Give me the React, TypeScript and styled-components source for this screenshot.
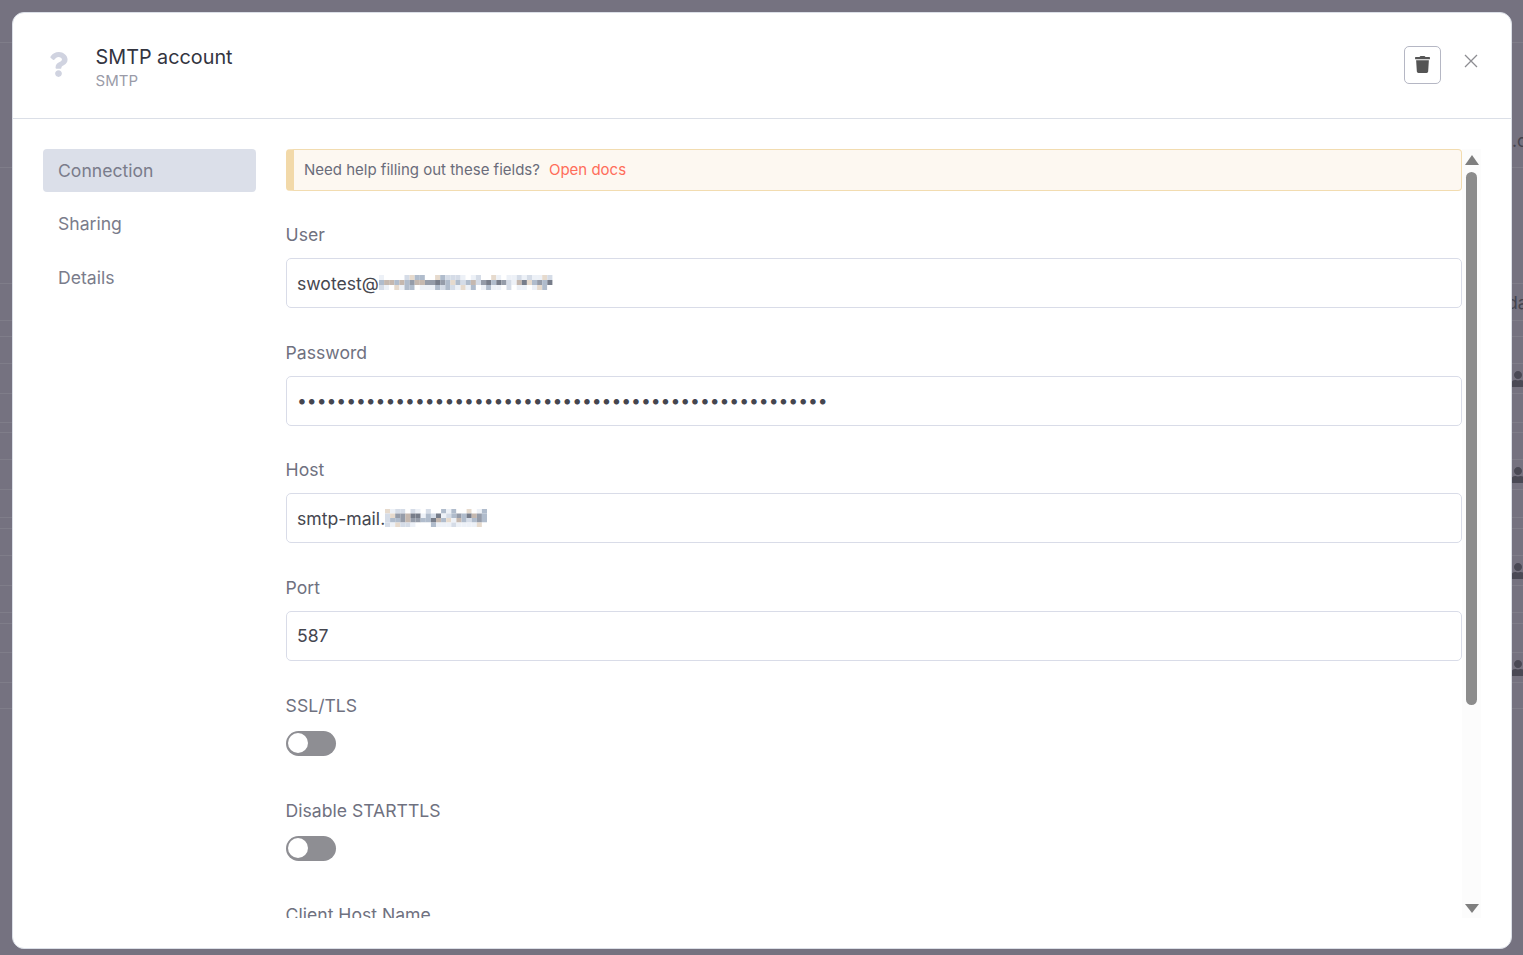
import React from 'react'
import styled, { createGlobalStyle } from 'styled-components'
import { FaQuestion, FaTrash, FaUser } from 'react-icons/fa'

const GlobalStyle = createGlobalStyle`
  html, body {
    margin: 0;
    padding: 0;
    height: 100%;
    overflow: hidden;
    background: #757280;
    font-family: Inter, "Liberation Sans", sans-serif;
  }
  * {
    box-sizing: border-box;
  }
`

// what is left of the page under the dimmed overlay
const Backdrop = styled.div`
  position: fixed;
  inset: 0;
  overflow: hidden;
  background: #757280;
`
const BackdropRow = styled.div<{ $height: number; $indent: number; $lift: number }>`
  height: ${({ $height }) => $height}px;
  border-bottom: 1px solid #7f7d89;
  display: flex;
  align-items: center;
  padding-left: ${({ $indent }) => $indent}px;
  padding-top: ${({ $lift }) => $lift}px;
  color: #45444f;
  font-size: 17.6px;
  white-space: nowrap;
`
const BackdropUser = styled(FaUser)`
  flex: none;
  color: #4a4955;
`

const Overlay = styled.div`
  position: fixed;
  inset: 0;
  padding: 12px 11px 6px 12px;
`
const Modal = styled.div`
  height: 100%;
  display: flex;
  flex-direction: column;
  background: #fff;
  border: 1px solid #dbdfe7;
  border-radius: 12px;
  overflow: hidden;
`

const Header = styled.header`
  flex: none;
  height: 106px;
  display: flex;
  align-items: center;
  padding: 0 32px 0 29px;
  border-bottom: 1px solid #dbdfe7;
`
const TypeIcon = styled(FaQuestion)`
  flex: none;
  width: 33px;
  height: 25px;
  margin: -2px 20.6px 0 0;
  color: #d0d3e0;
`
const HeaderText = styled.div`
  flex: 1;
  margin-top: 2px;
`
const Title = styled.div`
  font-size: 19.8px;
  line-height: 28px;
  color: #33343f;
`
const Subtitle = styled.div`
  margin-top: 1px;
  font-size: 15px;
  line-height: 18px;
  color: #9a9ba8;
`
const IconButton = styled.button`
  width: 37px;
  height: 38px;
  margin: -2px 22px 0 0;
  padding: 0;
  display: flex;
  align-items: center;
  justify-content: center;
  background: #fff;
  border: 1px solid #b5b7c4;
  border-radius: 5px;
  color: #555;
`
const CloseButton = styled.button`
  width: 16px;
  height: 16px;
  margin: -9px 0 0 0;
  padding: 0;
  display: flex;
  background: none;
  border: 0;
  color: #8d8d92;
`

const Body = styled.div`
  flex: 1;
  min-height: 0;
  display: flex;
  padding: 30px 30px 30px 30px;
`
const Sidebar = styled.nav`
  flex: none;
  width: 213px;
  margin-right: 30px;
  display: flex;
  flex-direction: column;
  gap: 10.3px;
`
const NavItem = styled.div<{ $active?: boolean }>`
  height: 43px;
  display: flex;
  align-items: center;
  padding-left: 15px;
  border-radius: 4px;
  font-size: 17.6px;
  color: #7a7c8b;
  background: ${({ $active }) => ($active ? '#dbdfe9' : 'transparent')};
`

const Content = styled.div`
  flex: 1;
  min-width: 0;
  overflow-y: auto;
  scrollbar-width: none;
`
const Callout = styled.div`
  height: 42px;
  margin-bottom: 32.36px;
  display: flex;
  align-items: center;
  padding: 0 0 2px 10px;
  background: #fdf8f1;
  border: 1px solid #f2dcb0;
  border-left: 8px solid #f2d9a9;
  border-radius: 4px;
  font-size: 15px;
  color: #6a6c7a;
`
const DocsLink = styled.a`
  margin-left: 9px;
  color: #ff6d5a;
`

const Field = styled.div<{ $gap: number }>`
  margin-bottom: ${({ $gap }) => $gap}px;
`
const Label = styled.label<{ $gap: number }>`
  display: block;
  height: 24px;
  margin-bottom: ${({ $gap }) => $gap}px;
  padding-left: 0;
  text-indent: -0.4px;
  font-size: 17.6px;
  line-height: 24px;
  color: #6f7180;
`
const InputWrap = styled.div`
  position: relative;
`
const Input = styled.input`
  display: block;
  width: 100%;
  height: 50px;
  padding: 0 10px;
  background: #fff;
  border: 1px solid #d9dce8;
  border-radius: 5px;
  outline: none;
  font-family: inherit;
  font-size: 17.6px;
  color: #45464f;
`
const PasswordInput = styled(Input)`
  letter-spacing: -0.07px;
`
const Redacted = styled.svg<{ $left: number; $top: number }>`
  position: absolute;
  left: ${({ $left }) => $left}px;
  top: ${({ $top }) => $top}px;
`
const Toggle = styled.div`
  position: relative;
  width: 50px;
  height: 25px;
  border-radius: 13px;
  background: #8e8e93;
`
const Knob = styled.span`
  position: absolute;
  left: 2px;
  top: 2.5px;
  width: 20px;
  height: 20px;
  border-radius: 50%;
  background: #fff;
`

const Scrollbar = styled.div`
  flex: none;
  width: 19px;
  display: flex;
  flex-direction: column;
  align-items: center;
  padding-top: 6px;
  background: #fcfcfc;
`
const ArrowUp = styled.div`
  flex: none;
  width: 0;
  height: 0;
  border-left: 7px solid transparent;
  border-right: 7px solid transparent;
  border-bottom: 10px solid #7f7f7f;
`
const ArrowDown = styled.div`
  flex: none;
  width: 0;
  height: 0;
  margin-bottom: 5px;
  border-left: 7px solid transparent;
  border-right: 7px solid transparent;
  border-top: 9px solid #7f7f7f;
`
const Thumb = styled.div`
  flex: none;
  width: 11px;
  height: 533px;
  margin-top: 7px;
  border-radius: 6px;
  background: #8c8c8c;
`
const Spacer = styled.div`
  flex: 1;
`

const backdropRows: { bottom: number; text?: string; user?: boolean; indent?: number; lift?: number }[] = [
  { bottom: 42 },
  { bottom: 167, text: '.c', indent: 1512, lift: 70 },
  { bottom: 283 },
  { bottom: 320, text: 'da', indent: 1507 },
  { bottom: 336 },
  { bottom: 363 },
  { bottom: 393, user: true },
  { bottom: 422 },
  { bottom: 432 },
  { bottom: 459 },
  { bottom: 489, user: true },
  { bottom: 517 },
  { bottom: 528 },
  { bottom: 555 },
  { bottom: 585, user: true },
  { bottom: 612 },
  { bottom: 623 },
  { bottom: 652 },
  { bottom: 682, user: true },
  { bottom: 708 },
]

const palette = ['#ffffff', '#edf1f7', '#d5dce7', '#b0bccc', '#959ca9', '#e6dacd', '#c5b8af', '#777d8a']

// the address is pixelated in the picture: a small mosaic of fixed cells
const MosaicCells: React.FC<{ cols: number; rows: number; w: number; h: number; seed: number }> = ({
  cols,
  rows,
  w,
  h,
  seed,
}) => {
  const cells = []
  let n = seed
  for (let y = 0; y < rows; y++) {
    for (let x = 0; x < cols; x++) {
      n = (n * 1103515245 + 12345) % 2147483648
      const r = (n >> 12) % 100
      const edge = y === 0 || y === rows - 1
      const idx = edge
        ? r < 25 ? 0 : r < 50 ? 1 : r < 70 ? 2 : r < 85 ? 5 : 3
        : r < 8 ? 1 : r < 20 ? 2 : r < 42 ? 3 : r < 65 ? 4 : r < 76 ? 5 : r < 88 ? 6 : 7
      cells.push(<rect key={`${x}-${y}`} x={x * w} y={y * h} width={w} height={h} fill={palette[idx]} />)
    }
  }
  return <>{cells}</>
}

export default function App() {
  let previous = 0
  return (
    <>
      <GlobalStyle />
      <Backdrop>
        {backdropRows.map((row) => {
          const height = row.bottom + 1 - previous
          previous = row.bottom + 1
          return (
            <BackdropRow
              key={row.bottom}
              $height={height}
              $indent={row.indent ?? 1510}
              $lift={row.lift ?? 0}
            >
              {row.text}
              {row.user && <BackdropUser size={16} />}
            </BackdropRow>
          )
        })}
      </Backdrop>
      <Overlay>
        <Modal>
          <Header>
            <TypeIcon />
            <HeaderText>
              <Title>SMTP account</Title>
              <Subtitle>SMTP</Subtitle>
            </HeaderText>
            <IconButton>
              <FaTrash size={17} />
            </IconButton>
            <CloseButton>
              <svg width="16" height="16" viewBox="0 0 16 16" fill="none" stroke="currentColor" strokeWidth="1.3">
                <path d="M2 2l12 12M14 2L2 14" />
              </svg>
            </CloseButton>
          </Header>
          <Body>
            <Sidebar>
              <NavItem $active>Connection</NavItem>
              <NavItem>Sharing</NavItem>
              <NavItem>Details</NavItem>
            </Sidebar>
            <Content>
              <Callout>
                Need help filling out these fields?
                <DocsLink>Open docs</DocsLink>
              </Callout>
              <Field $gap={32.67}>
                <Label $gap={10.8}>User</Label>
                <InputWrap>
                  <Input readOnly value="swotest@" />
                  <Redacted $left={93} $top={17} width="174" height="15">
                    <MosaicCells cols={34} rows={3} w={5.1} h={5} seed={7} />
                  </Redacted>
                </InputWrap>
              </Field>
              <Field $gap={32.87}>
                <Label $gap={10.8}>Password</Label>
                <PasswordInput readOnly type="password" value={'x'.repeat(54)} />
              </Field>
              <Field $gap={32.87}>
                <Label $gap={10.8}>Host</Label>
                <InputWrap>
                  <Input readOnly value="smtp-mail." />
                  <Redacted $left={99} $top={16} width="103" height="18">
                    <MosaicCells cols={20} rows={4} w={5.1} h={4.5} seed={31} />
                  </Redacted>
                </InputWrap>
              </Field>
              <Field $gap={32.87}>
                <Label $gap={10.8}>Port</Label>
                <Input readOnly value="587" />
              </Field>
              <Field $gap={43}>
                <Label $gap={13}>SSL/TLS</Label>
                <Toggle>
                  <Knob />
                </Toggle>
              </Field>
              <Field $gap={42.4}>
                <Label $gap={13}>Disable STARTTLS</Label>
                <Toggle>
                  <Knob />
                </Toggle>
              </Field>
              <Field $gap={32.67}>
                <Label $gap={11}>Client Host Name</Label>
                <Input readOnly value="" />
              </Field>
            </Content>
            <Scrollbar>
              <ArrowUp />
              <Thumb />
              <Spacer />
              <ArrowDown />
            </Scrollbar>
          </Body>
        </Modal>
      </Overlay>
    </>
  )
}
